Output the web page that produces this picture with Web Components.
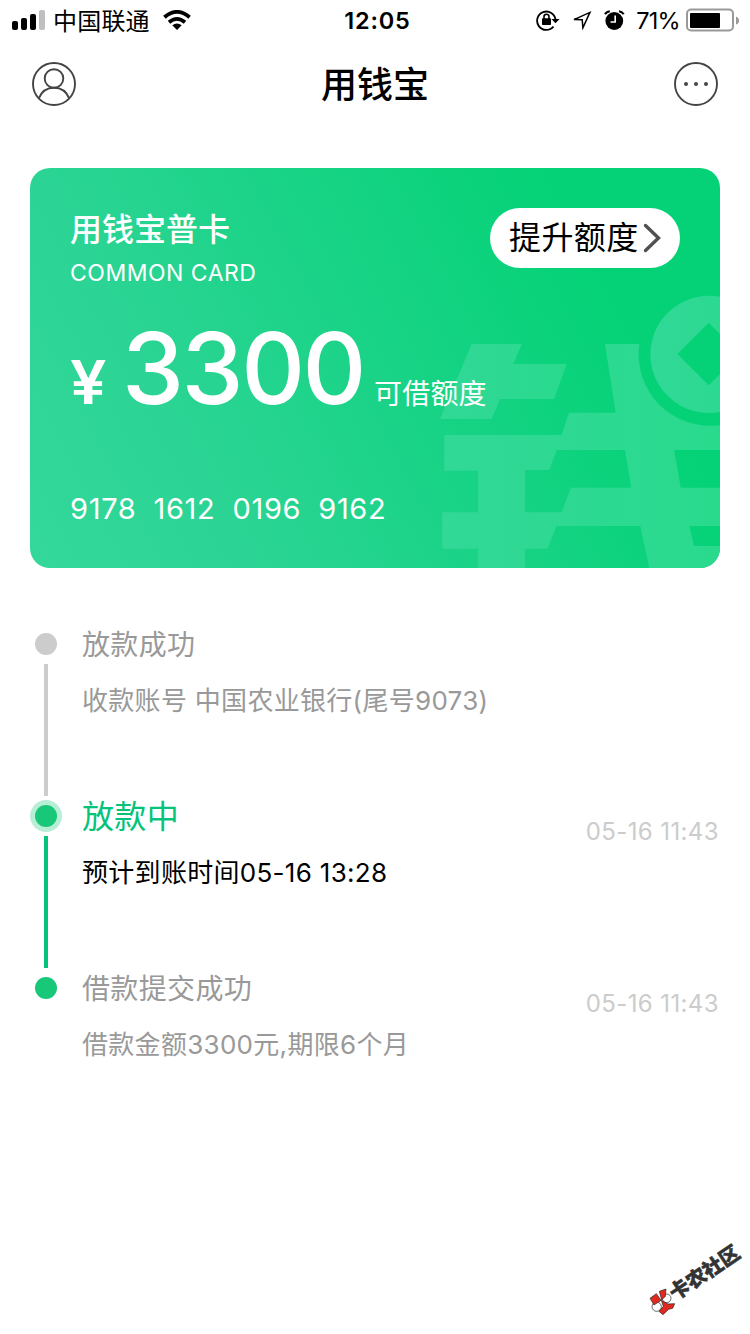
<!DOCTYPE html>
<html lang="zh-CN">
<head>
<meta charset="utf-8">
<title>用钱宝</title>
<style>
html,body{margin:0;height:100%;background:#fff}
body{font-family:Inter,"Noto Sans CJK SC",sans-serif;color:#000}
</style>
</head>
<body>
<loan-app></loan-app>
<script>
const define = (name, html) => {
  const t = document.createElement('template');
  t.innerHTML = html;
  customElements.define(name, class extends HTMLElement {
    constructor() {
      super();
      this.attachShadow({mode: 'open'}).append(t.content.cloneNode(true));
    }
  });
};

define('status-bar', `
<style>
:host{display:grid;grid-template-columns:1fr auto 1fr;height:40px;align-items:center;box-sizing:border-box;padding:0 11px 0 12px;font-size:24px;line-height:40px}
.l,.r{display:flex;align-items:center;height:40px}
.r{justify-content:flex-end}
svg{display:block;flex:none}
.name{margin-left:8px;letter-spacing:.2px;font-family:"Noto Sans CJK SC",sans-serif}
.time{font-weight:600;font-size:23.5px;letter-spacing:.8px;padding:2px 0 0 4px;line-height:38px}
.pct{font-size:23.5px;letter-spacing:-.7px;margin:0 6px 0 11px;padding-top:2px;line-height:38px}
</style>
<div class="l">
<svg width="33" height="20" viewBox="0 0 33 20"><rect x="0" y="11" width="6" height="9" rx="2"/><rect x="9" y="8" width="6" height="12" rx="2"/><rect x="18" y="4" width="6" height="16" rx="2"/><rect x="27" y="0" width="6" height="20" rx="2" fill="#bfbfbf"/></svg>
<span class="name">中国联通</span>
<svg style="margin-left:12px" width="30" height="20" viewBox="0 0 30 20"><g fill="none" stroke="#000" stroke-width="3.800"><path d="M2.400 7.200Q15-3.400 27.600 7.200"/><path d="M7 12.200Q15 5.600 23 12.200"/></g><path d="M10.300 15.200Q15 11.600 19.700 15.200L15 20Z"/></svg>
</div>
<span class="time">12:05</span>
<div class="r">
<svg width="24" height="22" viewBox="0 0 24 22"><path d="M17.500 17.500A9.200 9.200 0 1 1 19.500 11" fill="none" stroke="#000" stroke-width="1.800"/><path d="M15.500 10H23.500L19.500 14.300Z"/><rect x="6" y="9.200" width="9" height="6.800" rx=".8"/><path d="M8 10V7.700a2.500 2.500 0 0 1 5 0V10" fill="none" stroke="#000" stroke-width="1.600"/></svg>
<svg style="margin-left:12px" width="20" height="20" viewBox="0 0 20 20"><path d="M2 9.600L17.900 2.400 10.900 17.800 10.200 9.800Z" fill="none" stroke="#000" stroke-width="1.500"/></svg>
<svg style="margin-left:12px" width="21" height="20" viewBox="0 0 21 20"><circle cx="10.300" cy="11" r="8.900"/><path d="M1 4.300Q2.200 1.800 5.800 1.200M15 1.200Q18.500 1.800 19.700 4.300" fill="none" stroke="#000" stroke-width="2"/><path d="M11.200 5.500V12H6.500" fill="none" stroke="#fff" stroke-width="1.600"/></svg>
<span class="pct">71%</span>
<svg width="53" height="24" viewBox="0 0 53 24"><rect x="1" y="1.500" width="46" height="21" rx="4" fill="none" stroke="#999" stroke-width="2"/><rect x="4" y="5" width="30" height="15" rx="1"/><path d="M50 8.500Q53 9.500 53 12.500T50 16.500Z" fill="#999"/></svg>
</div>`);

define('nav-bar', `
<style>
:host{display:flex;height:88px;padding:0 30px;box-sizing:border-box;align-items:center;justify-content:space-between}
svg{display:block}
h1{margin:0;font-size:36px;font-weight:500;line-height:88px;padding-top:1px}
</style>
<svg width="48" height="48" viewBox="0 0 48 48" fill="none" stroke="#444" stroke-width="1.900"><circle cx="24" cy="24" r="21"/><circle cx="24" cy="18.500" r="9.300"/><path d="M8.800 38.300C11.500 31.800 17 27.800 24 27.800S36.500 31.800 39.200 38.300"/></svg>
<h1><slot></slot></h1>
<svg width="48" height="48" viewBox="0 0 48 48"><circle cx="24" cy="24" r="21" fill="none" stroke="#444" stroke-width="1.900"/><g fill="#444"><circle cx="14" cy="24" r="2"/><circle cx="24" cy="24" r="2"/><circle cx="34" cy="24" r="2"/></g></svg>`);

define('pill-button', `
<style>
:host{display:flex;align-items:center;width:190px;height:60px;border-radius:30px;background:#fff;box-sizing:border-box;padding-left:19px;color:#000;font-size:32px;letter-spacing:.4px}
span{line-height:60px;height:60px}
svg{margin-left:4px;display:block}
</style><span><slot></slot></span>
<svg width="20" height="30" viewBox="0 0 20 30"><path d="M2.500 2.500L15.500 15 2.500 27.500" fill="none" stroke="#505050" stroke-width="3.400" stroke-linecap="round"/></svg>`);

define('credit-card', `
<style>
:host{display:grid;grid-template-rows:156px 88px 1fr;position:relative;overflow:hidden;margin:40px 30px 0;height:400px;border-radius:20px;color:#fff;box-sizing:border-box;padding:0 40px;background:linear-gradient(62deg,#33d89a 0%,#2bd494 25%,#05d277 80%)}
.mark{position:absolute;left:0;top:0}
.top{position:relative;display:flex;justify-content:space-between;align-items:flex-start;padding-top:40px}
.name{font-size:32px;font-weight:500;line-height:42px;padding-top:1px}
.en{font-size:23px;line-height:30px;margin-top:7px;letter-spacing:.5px}
.sum{position:relative;display:flex;align-items:baseline;height:88px;line-height:88px}
.yen{font-size:60px;font-weight:600;width:52px;transform:scaleX(1.08);transform-origin:0 0}
.amt{font-size:99px;font-weight:500;letter-spacing:-2.500px;width:252px}
.cap{font-size:28px;letter-spacing:.2px}
.num{position:relative;display:flex;gap:17px;font-size:29px;letter-spacing:.68px;line-height:40px;padding:77px 0 0}
</style>
<svg class="mark" width="690" height="400" viewBox="0 0 690 400">
<defs><linearGradient id="g" x1="0" y1="0" x2="1" y2="0"><stop offset="0" stop-color="#31d897"/><stop offset="1" stop-color="#29da8d"/></linearGradient></defs>
<g fill="url(#g)" fill-rule="evenodd">
<path d="M441.700 176H491.700L483.300 196H536.700L524 231H470L461.700 251H410Z"/>
<path d="M414.300 267H531.700L539 244.700H585.700L575 176H609.300A71.700 71.700 0 0 0 690 257.200V282H644L650.700 319.700H690V358H659.300L664 378H690V400H619.300L610.300 358H526.700L517.300 380.700H495V400H448V380.700H412.300V344.300H448V302.700H414.300ZM495 302V344.300H531.700L541 319.700H601.300L595 282H526.700L519.300 302Z"/>
<path d="M679 127.800a58.600 58.600 0 1 0 .01 0ZM678.700 154.700L710 186 678.700 217.300 647.400 186Z"/>
</g></svg>
<div class="top"><div><div class="name">用钱宝普卡</div><div class="en">COMMON CARD</div></div><pill-button>提升额度</pill-button></div>
<div class="sum"><span class="yen">¥</span><span class="amt">3300</span><span class="cap">可借额度</span></div>
<div class="num"><span>9178</span><span>1612</span><span>0196</span><span>9162</span></div>`);

define('time-step', `
<style>
:host{display:grid;grid-template-columns:32px 1fr auto;column-gap:20px;height:172px;color:#999}
.rail{display:flex;flex-direction:column;align-items:center}
.dot{width:22px;height:22px;margin:5px 0 9px;border-radius:50%;background:#ccc;flex:none}
.line{width:4px;height:132px;background:#ccc}
.t{font-size:28px;line-height:32px;letter-spacing:.35px;padding-top:1px}
.d{font-size:26px;line-height:36px;margin-top:22px;letter-spacing:.3px;white-space:nowrap}
.when{color:#ccc;font-size:24px;line-height:30px;margin-top:17px;letter-spacing:.4px}
:host([state=active]) .dot{background:#18c778;box-shadow:0 0 0 5px #b9eed6}
:host([state=active]) .line{background:#05c37b}
:host([state=active]) .t{font-size:32px;color:#05c37b}
:host([state=active]) .d{color:#000}
:host([state=done]) .dot{background:#18c778}
:host([state=done]) .line{display:none}
</style>
<div class="rail"><div class="dot"></div><div class="line"></div></div>
<div><div class="t"><slot name="title"></slot></div><div class="d"><slot></slot></div></div>
<div class="when"><slot name="when"></slot></div>`);

define('community-mark', `
<style>
:host{position:absolute;left:640px;top:1235px;width:110px;height:90px;display:grid;place-items:center;color:#333;font:900 20px/30px "Noto Sans CJK SC",sans-serif}
svg{position:absolute;left:0;top:0}
span{transform:translate(9px,-8px) rotate(-34deg);-webkit-text-stroke:.5px #333;white-space:nowrap}
</style>
<svg width="110" height="90" viewBox="0 0 330 270"><g stroke="#222" stroke-width="2"><circle cx="50" cy="215" r="14" fill="#fff"/><circle cx="80" cy="190" r="13" fill="#fff"/><g fill="#e02a20"><path d="M30 190L49 176 63 196 42 210Z"/><path d="M58 169L78 162 76 184 65 195Z"/><path d="M64 196L84 207 104 206 98 220 86 223 69 239 57 229 70 214Z"/></g></g></svg><span>卡农社区</span>`);

define('loan-app', `
<style>
:host{display:block;width:750px;height:1334px;position:relative;overflow:hidden;background:#fff}
.steps{padding:60px 31px 0 30px}
</style>
<status-bar></status-bar>
<nav-bar>用钱宝</nav-bar>
<credit-card></credit-card>
<div class="steps">
<time-step><span slot="title">放款成功</span>收款账号 中国农业银行(尾号9073)</time-step>
<time-step state="active"><span slot="title">放款中</span>预计到账时间05-16 13:28<span slot="when">05-16 11:43</span></time-step>
<time-step state="done"><span slot="title">借款提交成功</span>借款金额3300元,期限6个月<span slot="when">05-16 11:43</span></time-step>
</div>
<community-mark></community-mark>`);
</script>
</body>
</html>
